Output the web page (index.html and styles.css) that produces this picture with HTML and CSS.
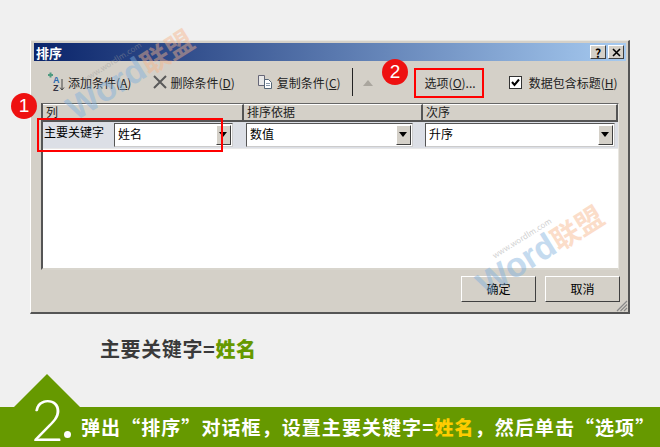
FILE: index.html
```html
<!DOCTYPE html>
<html lang="zh-CN">
<head>
    <meta charset="UTF-8">
    <title>排序</title>
    <link rel="stylesheet" href="styles.css">
</head>
<body>
    <div class="dialog">
        <div class="titlebar">
            <span class="title">排序</span>
            <span class="caption-btn">?</span>
            <span class="caption-btn">
                <svg width="9" height="9" viewBox="0 0 9 9"><path d="M1 1l7 7M8 1L1 8" stroke="#000" stroke-width="1.6"/></svg>
            </span>
        </div>
        <div class="toolbar">
            <div class="tool tool-add">
                <svg width="20" height="20" viewBox="0 0 20 20">
                    <path d="M1 3h5M3.500 .5v5" stroke="#4f9a80" stroke-width="2"/>
                    <text x="6" y="11" class="icon-az">A</text>
                    <text x="6" y="19" class="icon-az icon-z">Z</text>
                    <path d="M15 7v11M13 15.500l2 2.500 2-2.500" stroke="#444" fill="none"/>
                </svg>
                <span>添加条件(<u>A</u>)</span>
            </div>
            <div class="tool tool-del">
                <svg width="16" height="16" viewBox="0 0 16 16"><path d="M2 2l12 12M14 2L2 14" stroke="#5a5a5a" stroke-width="2"/></svg>
                <span>删除条件(<u>D</u>)</span>
            </div>
            <div class="tool tool-copy">
                <svg width="16" height="16" viewBox="0 0 16 16">
                    <path d="M1.500 1.500h6v10h-6z" fill="#e8e8e8" stroke="#667"/>
                    <path d="M7.500 5.500h4l3 3v6h-7z" fill="#fff" stroke="#567"/>
                    <path d="M9 9.500h4M9 11.500h4" stroke="#89a"/>
                </svg>
                <span>复制条件(<u>C</u>)</span>
            </div>
            <span class="sep"></span>
            <span class="arrow arrow-up"></span>
            <span class="arrow arrow-down"></span>
            <div class="tool tool-options"><span>选项(<u>O</u>)...</span></div>
            <span class="check">
                <svg width="11" height="11" viewBox="0 0 11 11"><path d="M2 5l2.500 3L9 2.500" stroke="#000" stroke-width="2" fill="none"/></svg>
            </span>
            <div class="tool"><span>数据包含标题(<u>H</u>)</span></div>
        </div>
        <div class="grid">
            <div class="grid-head">
                <div class="head-cell">列</div>
                <div class="head-cell">排序依据</div>
                <div class="head-cell">次序</div>
            </div>
            <div class="grid-row">
                <div class="key-label">主要关键字</div>
                <div class="combo combo-key">姓名<span class="drop"></span></div>
                <div class="combo combo-by">数值<span class="drop"></span></div>
                <div class="combo combo-order">升序<span class="drop"></span></div>
            </div>
        </div>
        <div class="actions">
            <span class="btn">确定</span>
            <span class="btn">取消</span>
        </div>
        <svg class="grip" width="12" height="12" viewBox="0 0 12 12"><path d="M11 1L1 11M11 4.500L4.500 11M11 8l-3 3" stroke="#888" stroke-width="1.200"/></svg>
    </div>

    <p class="caption">主要关键字=<b>姓名</b></p>

    <div class="footer">
        <span class="step-tab"></span>
        <span class="step-num">2</span>
        <span class="step-dot"></span>
        <span class="step-text">弹出“排序”对话框，设置主要关键字=<b>姓名</b>，然后单击“选项”</span>
    </div>

    <!-- annotations over the dialog -->
    <span class="mark mark-key"></span>
    <span class="mark mark-options"></span>
    <span class="badge badge-1">1</span>
    <span class="badge badge-2">2</span>

    <div class="wm wm-top"><small>www.wordlm.com</small><span>Word</span><b>联盟</b></div>
    <div class="wm wm-bottom"><small>www.wordlm.com</small><span>Word</span><b>联盟</b></div>
</body>
</html>
```

FILE: styles.css
```css
:root {
    --face: #d4d0c8;
    --green: #669900;
    --dark: #404040;
    --red: #ff0000;
}
html, body {
    margin: 0;
    height: 447px;
    overflow: hidden;
}
body {
    position: relative;
    background: #f0f0f0;
    font-family: "Noto Sans CJK SC", "Liberation Sans", sans-serif;
    font-size: 12px;
    color: #000;
}
u { text-underline-offset: 1px; }

.dialog {
    position: relative;
    box-sizing: border-box;
    width: 600px;
    height: 274px;
    margin: 40px 0 0 30px;
    padding: 2px 2px 0 3px;
    background: var(--face);
    border-right: 2px solid #555;
    border-bottom: 2px solid #555;
    border-top: 1px solid #e8e6e0;
    border-left: 1px solid #fff;
}
.titlebar {
    display: flex;
    align-items: center;
    gap: 2px;
    height: 18px;
    padding: 0 2px;
    background: linear-gradient(to right, #0a246a, #a6caf0);
}
.title {
    flex: 1;
    color: #fff;
    font-weight: bold;
    font-size: 13px;
}
.caption-btn {
    box-sizing: border-box;
    display: flex;
    justify-content: center;
    align-items: center;
    width: 16px;
    height: 14px;
    background: var(--face);
    border: 1px solid;
    border-color: #fff #404040 #404040 #fff;
    font-weight: bold;
    font-size: 12px;
}

.toolbar {
    display: flex;
    align-items: center;
    height: 42px;
    padding-left: 13px;
    color: #222;
}
.tool {
    display: flex;
    align-items: center;
    gap: 1px;
    white-space: nowrap;
}
.tool-del { margin-left: 21px; gap: 2px; }
.tool-copy { margin-left: 22px; gap: 4px; }
.sep {
    width: 1px;
    height: 28px;
    margin-left: 11px;
    background: #222;
}
.arrow {
    width: 0;
    height: 0;
    border: 5px solid transparent;
}
.arrow-up {
    margin: -4px 0 0 10px;
    border-bottom: 6px solid #aaa69e;
}
.arrow-down {
    margin: 4px 0 0 14px;
    border-top: 6px solid #aaa69e;
}
.tool-options { margin-left: 28px; }
.check {
    box-sizing: border-box;
    display: flex;
    justify-content: center;
    align-items: center;
    width: 13px;
    height: 13px;
    margin: 0 7px 0 33px;
    background: #fff;
    border: 1px solid #333;
}
.icon-az {
    font: bold 9px "Liberation Sans", sans-serif;
    fill: #2a6ab0;
}
.icon-z { fill: #334; }

.grid {
    box-sizing: border-box;
    width: 578px;
    height: 167px;
    margin-left: 7px;
    background: #fff;
    border-left: 2px solid #555;
    border-top: 1px solid #666;
    border-bottom: 2px solid #d8d5cd;
    border-right: 1px solid #e8e6e0;
}
.grid-head {
    display: grid;
    grid-template-columns: 201px 179px 1fr;
    height: 18px;
}
.head-cell {
    box-sizing: border-box;
    padding-left: 3px;
    background: var(--face);
    border-right: 2px solid #555;
    border-bottom: 2px solid #555;
    border-top: 1px solid #fff;
    color: #222;
    line-height: 13px;
}
.grid-row {
    display: flex;
    height: 26px;
    background: #dcdfe6;
    border-bottom: 1px solid #e8e8e8;
}
.key-label {
    width: 71px;
    padding: 2px 0 0 1px;
    box-sizing: border-box;
    line-height: 16px;
}
.combo {
    position: relative;
    box-sizing: border-box;
    height: 24px;
    margin-top: 1px;
    padding-left: 3px;
    background: #fff;
    border: 1px solid;
    border-color: #555 #ccc #ccc #555;
    line-height: 20px;
}
.combo-key { width: 119px; }
.combo-by { width: 167px; margin-left: 13px; }
.combo-order { width: 190px; margin-left: 12px; }
.drop {
    position: absolute;
    top: 1px;
    right: 1px;
    box-sizing: border-box;
    width: 15px;
    height: 20px;
    background: var(--face);
    border: 1px solid;
    border-color: #fff #404040 #404040 #fff;
}
.drop::after {
    content: "";
    position: absolute;
    left: 2px;
    top: 6px;
    border: 4px solid transparent;
    border-top: 5px solid #000;
}

.actions {
    display: flex;
    justify-content: flex-end;
    gap: 9px;
    padding: 6px 6px 0 0;
}
.btn {
    box-sizing: border-box;
    width: 75px;
    height: 26px;
    text-align: center;
    line-height: 23px;
    font-size: 12px;
    background: var(--face);
    border: 1px solid;
    border-color: #fff #404040 #404040 #fff;
}
.grip {
    position: absolute;
    right: 0;
    bottom: 0;
}

.caption {
    margin: 21px 0 0 100px;
    font-size: 20px;
    line-height: 28px;
    font-weight: bold;
    color: #3a3a3a;
    letter-spacing: .6px;
}
.caption b { color: var(--green); }

.footer {
    position: absolute;
    left: 0;
    right: 0;
    bottom: 0;
    height: 40px;
    background: var(--green);
    color: #fff;
}
.step-tab {
    position: absolute;
    left: 14px;
    top: -33px;
    border-left: 33px solid transparent;
    border-right: 33px solid transparent;
    border-bottom: 33px solid var(--green);
}
.step-num {
    position: absolute;
    left: 31px;
    top: -16px;
    font-family: "Lato", sans-serif;
    font-weight: 300;
    font-size: 57px;
    line-height: 56px;
}
.step-dot {
    position: absolute;
    left: 64px;
    top: 24px;
    width: 7px;
    height: 7px;
    border-radius: 50%;
    background: #fff;
}
.step-text {
    position: absolute;
    left: 81px;
    top: 6px;
    font-size: 19px;
    letter-spacing: 1.07px;
    line-height: 28px;
    font-weight: bold;
    white-space: nowrap;
}
.step-text b { color: #ffcc00; }

.mark {
    position: absolute;
    box-sizing: border-box;
    border: 2px solid var(--red);
}
.mark-key { left: 37px; top: 118px; width: 186px; height: 34px; }
.mark-options { left: 414px; top: 68px; width: 70px; height: 30px; }
.badge {
    position: absolute;
    width: 26px;
    height: 26px;
    border-radius: 50%;
    background: #ee1111;
    color: #fff;
    text-align: center;
    font-family: "Liberation Sans", sans-serif;
    font-size: 19px;
    line-height: 26px;
}
.badge-1 { left: 11px; top: 93px; }
.badge-2 { left: 382px; top: 59px; }

.wm {
    position: absolute;
    display: flex;
    align-items: baseline;
    transform: rotate(-32deg);
    transform-origin: left bottom;
    white-space: nowrap;
    opacity: .45;
    pointer-events: none;
}
.wm span {
    font: bold 34px "Liberation Sans", sans-serif;
    color: #7fb0dd;
}
.wm b {
    font-size: 28px;
    color: #f7b48a;
}
.wm small {
    position: absolute;
    left: 28px;
    top: -5px;
    font-size: 8px;
    color: #999;
}
.wm-top { left: 80px; top: 88px; }
.wm-bottom { left: 490px; top: 264px; }
```
